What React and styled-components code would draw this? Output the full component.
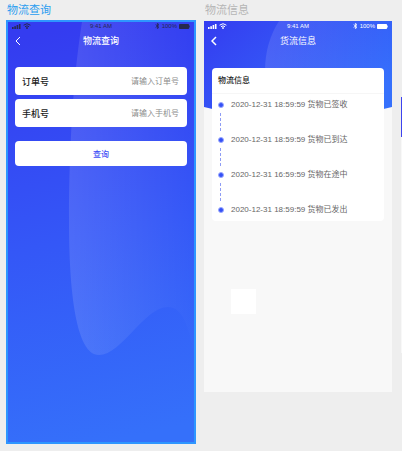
import React from "react";
import styled, { createGlobalStyle } from "styled-components";

const steps = [
  { id: 1, time: "2020-12-31 18:59:59", text: "货物已签收" },
  { id: 2, time: "2020-12-31 18:59:59", text: "货物已到达" },
  { id: 3, time: "2020-12-31 16:59:59", text: "货物在途中" },
  { id: 4, time: "2020-12-31 18:59:59", text: "货物已发出" },
];

function StatusBar({ dark }) {
  return (
    <Status $dark={dark}>
      <Signals>
        <svg width="9" height="5" viewBox="0 0 9 5" fill="currentColor">
          <rect x="0" y="3" width="1.6" height="2" />
          <rect x="2.3" y="2.2" width="1.6" height="2.8" />
          <rect x="4.6" y="1" width="1.6" height="4" />
          <rect x="6.9" y="0" width="1.6" height="5" />
        </svg>
        <svg width="8" height="6" viewBox="0 0 8 6" fill="none" stroke="currentColor">
          <path d="M0.6 2.2Q4 -0.8 7.4 2.2" />
          <path d="M2 3.7Q4 2 6 3.7" />
          <circle cx="4" cy="5" r="0.5" fill="currentColor" />
        </svg>
      </Signals>
      <Clock>9:41 AM</Clock>
      <Power>
        <svg width="5" height="6" viewBox="0 0 5 6" fill="none" stroke="currentColor" strokeWidth="0.8">
          <path d="M0.6 1.5L4 4.3L2.4 5.6V0.4L4 1.7L0.6 4.5" />
        </svg>
        <span>100%</span>
        <svg width="11" height="5" viewBox="0 0 11 5" fill="currentColor">
          <rect width="10" height="5" rx="0.8" />
          <rect x="10.3" y="1.5" width="0.7" height="2" />
        </svg>
      </Power>
    </Status>
  );
}

function TitleBar({ title, light }) {
  return (
    <Nav>
      <BackButton type="button" aria-label="返回">
        <svg width="6" height="10" viewBox="0 0 6 10" fill="none" stroke="currentColor" strokeWidth={light ? 1 : 1.5}>
          <path d="M5 1L1 5L5 9" />
        </svg>
      </BackButton>
      <NavTitle $light={!light}>{title}</NavTitle>
    </Nav>
  );
}

function QueryScreen() {
  return (
    <QueryBoard>
      <Backdrop viewBox="0 0 186 420" preserveAspectRatio="none" aria-hidden="true">
        <defs>
          <linearGradient id="queryBase" x1="0.45" y1="0" x2="0.55" y2="1">
            <stop offset="0" stopColor="#343cf0" />
            <stop offset="0.5" stopColor="#3457f7" />
            <stop offset="1" stopColor="#3570fa" />
          </linearGradient>
          <linearGradient id="queryWave" x1="0" y1="0.5" x2="1" y2="0.4">
            <stop offset="0" stopColor="#fff" stopOpacity="0.12" />
            <stop offset="1" stopColor="#fff" stopOpacity="0" />
          </linearGradient>
        </defs>
        <rect width="186" height="420" fill="url(#queryBase)" />
        <path
          d="M74 0C66 50 61 120 61 198C61 270 68 333 91 333C114 333 136 285 160 285C175 285 181 306 186 332V0Z"
          fill="url(#queryWave)"
        />
      </Backdrop>
      <StatusBar dark />
      <TitleBar title="物流查询" light />
      <QueryForm onSubmit={(e) => e.preventDefault()}>
        <Field>
          <label htmlFor="order">订单号</label>
          <input id="order" type="text" placeholder="请输入订单号" />
        </Field>
        <Field>
          <label htmlFor="phone">手机号</label>
          <input id="phone" type="tel" placeholder="请输入手机号" />
        </Field>
        <SubmitButton type="submit">查询</SubmitButton>
      </QueryForm>
    </QueryBoard>
  );
}

function InfoScreen() {
  return (
    <InfoBoard>
      <HeaderArt viewBox="0 0 188 92" preserveAspectRatio="none" aria-hidden="true">
        <defs>
          <linearGradient id="infoBase" x1="0" y1="0" x2="1" y2="0.6">
            <stop offset="0" stopColor="#343cf0" />
            <stop offset="1" stopColor="#3570fc" />
          </linearGradient>
          <linearGradient id="infoWave" x1="0" y1="0" x2="1" y2="0">
            <stop offset="0" stopColor="#fff" stopOpacity="0.11" />
            <stop offset="1" stopColor="#fff" stopOpacity="0" />
          </linearGradient>
        </defs>
        <path d="M0 0H188V86Q94 110 0 86Z" fill="url(#infoBase)" />
        <path d="M75 0Q61 22 61 50V89H188V0Z" fill="url(#infoWave)" />
      </HeaderArt>
      <StatusBar />
      <TitleBar title="货流信息" />
      <InfoCard>
        <CardTitle>物流信息</CardTitle>
        <Timeline>
          {steps.map((step) => (
            <Step key={step.id}>
              <Dot />
              <span>
                {step.time} {step.text}
              </span>
            </Step>
          ))}
        </Timeline>
      </InfoCard>
      <Swatch />
    </InfoBoard>
  );
}

export default function App() {
  return (
    <>
      <GlobalStyle />
      <Canvas>
        <Artboard>
          <BoardName $active>物流查询</BoardName>
          <QueryScreen />
        </Artboard>
        <Artboard>
          <BoardName>物流信息</BoardName>
          <InfoScreen />
        </Artboard>
        <NextBoard />
      </Canvas>
    </>
  );
}

// Styled Components
const GlobalStyle = createGlobalStyle`
  * {
    box-sizing: border-box;
  }
  body {
    margin: 0;
    background: #eee;
    font-family: "Liberation Sans", "Noto Sans CJK SC", sans-serif;
  }
  button, input {
    font-family: inherit;
  }
`;

const Canvas = styled.main`
  display: grid;
  grid-template-columns: 190fr 188fr 2px;
  column-gap: 8px;
  align-items: start;
  min-height: 100vh;
  padding-left: 6px;
  overflow: hidden;
`;

const Artboard = styled.section`
  min-width: 0;
`;

const BoardName = styled.h2`
  margin: 0;
  height: 20px;
  padding-left: 1px;
  font-size: 11px;
  line-height: 20px;
  font-weight: 400;
  color: ${({ $active }) => ($active ? "#2a9df0" : "#b5b5b5")};
`;

const QueryBoard = styled.div`
  position: relative;
  z-index: 0;
  min-height: 424px;
  border: 2px solid #2e96ff;
`;

const InfoBoard = styled.div`
  position: relative;
  z-index: 0;
  min-height: 371px;
  margin-top: 1px;
  padding: 1px 0 77px;
  background: #f8f8f8;
`;

const Backdrop = styled.svg`
  position: absolute;
  inset: 0;
  z-index: -1;
  width: 100%;
  height: 100%;
`;

const HeaderArt = styled.svg`
  position: absolute;
  top: 0;
  left: 0;
  z-index: -1;
  width: 100%;
  height: 92px;
`;

const Status = styled.div`
  display: grid;
  grid-template-columns: 1fr auto 1fr;
  align-items: center;
  height: 8px;
  padding: 0 4px;
  font-size: 6px;
  line-height: 8px;
  color: ${({ $dark }) => ($dark ? "#262950" : "#fff")};
`;

const Signals = styled.div`
  display: flex;
  align-items: center;
  gap: 2px;
`;

const Clock = styled.span`
  text-align: center;
`;

const Power = styled.div`
  display: flex;
  align-items: center;
  justify-content: flex-end;
  gap: 2px;
`;

const Nav = styled.header`
  display: grid;
  grid-template-columns: 20px 1fr 20px;
  align-items: center;
  height: 22px;
`;

const BackButton = styled.button`
  display: flex;
  justify-content: center;
  padding: 0;
  border: 0;
  background: none;
  color: #fff;
`;

const NavTitle = styled.h1`
  margin: 0;
  font-size: 9px;
  line-height: 12px;
  font-weight: ${({ $light }) => ($light ? 400 : 500)};
  text-align: center;
  color: #fff;
`;

const QueryForm = styled.form`
  display: flex;
  flex-direction: column;
  gap: 4px;
  padding: 15px 7px;
`;

const Field = styled.div`
  display: flex;
  align-items: center;
  height: 28px;
  padding: 0 8px 0 7px;
  border-radius: 4px;
  background: #fff;

  label {
    font-size: 9px;
    font-weight: 500;
    color: #222;
  }
  input {
    flex: 1;
    min-width: 0;
    padding: 0;
    border: 0;
    background: none;
    font-size: 8px;
    text-align: right;
    color: #333;
  }
  input::placeholder {
    color: #8c8c8c;
    opacity: 1;
  }
`;

const SubmitButton = styled.button`
  height: 25px;
  margin-top: 10px;
  padding: 0;
  border: 0;
  border-radius: 4px;
  background: #fff;
  font-size: 8px;
  font-weight: 500;
  color: #3f50f5;
`;

const InfoCard = styled.div`
  margin: 16px 8px 0;
  padding-bottom: 5px;
  border-radius: 4px;
  background: #fff;
`;

const CardTitle = styled.h3`
  margin: 0;
  padding: 0 6px;
  border-bottom: 1px solid #f6f6f6;
  font-size: 8px;
  line-height: 25px;
  font-weight: 500;
  color: #222;
`;

const Timeline = styled.ol`
  margin: 0;
  padding: 5px 6px 0;
  list-style: none;
`;

const Step = styled.li`
  position: relative;
  display: flex;
  align-items: center;
  gap: 7px;
  height: 12px;
  font-size: 8px;
  line-height: 12px;
  white-space: nowrap;
  color: #666;

  &:not(:last-child) {
    margin-bottom: 23px;
  }
  &:not(:last-child)::after {
    content: "";
    position: absolute;
    top: 14px;
    left: 2px;
    height: 18px;
    border-left: 1px dashed #8e9cf5;
  }
`;

const Dot = styled.i`
  flex: none;
  width: 6px;
  height: 6px;
  border: 1px solid #9aa8ff;
  border-radius: 50%;
  background: #3450f5;
`;

const Swatch = styled.div`
  width: 25px;
  height: 25px;
  margin: 68px 0 0 27px;
  background: #fff;
`;

const NextBoard = styled.div`
  height: 256px;
  margin: 97px 0 0 1px;
  border-top: 40px solid #3d43ee;
  background: #f8f8f8;
`;
